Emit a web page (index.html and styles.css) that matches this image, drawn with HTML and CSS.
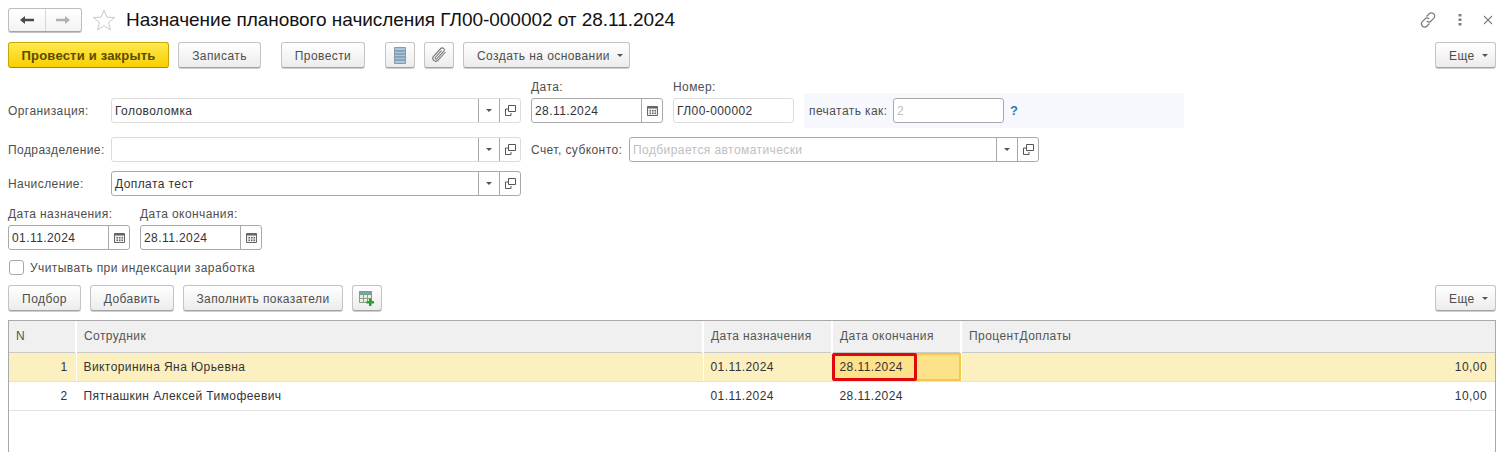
FILE: index.html
```html
<!DOCTYPE html>
<html lang="ru">
<head>
<meta charset="utf-8">
<title>Назначение планового начисления</title>
<link rel="stylesheet" href="styles.css">
</head>
<body>
<div class="page">
  <header class="titlebar">
    <div class="nav">
      <button class="nav-btn"><svg width="16" height="12" viewBox="0 0 16 12"><path d="M1 6l5-4v2.700h9v2.600H6V10z" fill="#4a4a4a"/></svg></button>
      <button class="nav-btn"><svg width="16" height="12" viewBox="0 0 16 12"><path d="M15 6l-5-4v2.700H1v2.600h9V10z" fill="#b0b0b0"/></svg></button>
    </div>
    <svg class="star" width="24" height="24" viewBox="0 0 24 24"><path d="M12 2l2.900 7.100 7.600.5-5.900 4.900 1.900 7.400L12 17.800l-6.500 4.100 1.900-7.400-5.900-4.900 7.600-.5z" fill="#fff" stroke="#c9c9c9"/></svg>
    <h1 class="title">Назначение планового начисления ГЛ00-000002 от 28.11.2024</h1>
    <div class="win-icons">
      <svg width="18" height="18" viewBox="0 0 18 18" fill="none" stroke="#7d7d7d" stroke-width="1.200"><path d="M7.500 5.500l2.500-2.500a3 3 0 0 1 4.700 4.300l-2.700 2.700a3 3 0 0 1-4.200 0"/><path d="M10.500 12.500L8 15a3 3 0 0 1-4.700-4.300L6 8a3 3 0 0 1 4.200 0"/></svg>
      <svg width="4" height="14" viewBox="0 0 4 14"><path d="M0.500 1h3v2.500h-3zM0.500 5.500h3V8h-3zM0.500 10h3v2.500h-3z" fill="#808080"/></svg>
      <svg width="10" height="10" viewBox="0 0 10 10"><path d="M1 1l8 8M9 1l-8 8" stroke="#808080" stroke-width="1.100"/></svg>
    </div>
  </header>

  <div class="toolbar">
    <button class="btn btn-primary w-post">Провести и закрыть</button>
    <button class="btn w-save">Записать</button>
    <button class="btn w-conduct gap-wide">Провести</button>
    <button class="btn btn-icon gap-wide"><svg width="12" height="17" viewBox="0 0 12 17"><path d="M.5.500h11v16H.5z" fill="#a9c8e0" stroke="#8a9aa6"/><path d="M1 4h10M1 7h10M1 10h10M1 13h10" stroke="#6f7f8c"/></svg></button>
    <button class="btn btn-icon"><svg width="18" height="18" viewBox="0 0 18 18" fill="none" stroke="#7a7a7a" stroke-width="1.100"><path d="M15.500 6l-7.800 8.500a3 3 0 0 1-4.400-4l7.500-8a2 2 0 0 1 3 2.700l-7 7.600a1 1 0 0 1-1.500-1.300l6.200-6.800"/></svg></button>
    <button class="btn w-create">Создать на основании<span class="caret"></span></button>
    <button class="btn w-more push">Еще<span class="caret"></span></button>
  </div>

  <div class="form-row row-top">
    <label class="label">Организация:</label>
    <div class="field w-main"><span class="value">Головоломка</span><span class="cell-btn"><span class="caret"></span></span><span class="cell-btn"><svg class="open" width="11" height="11" viewBox="0 0 11 11"><path d="M3.500.5h7v6h-7zM3.500 4H.500v6.500H6V8" fill="none" stroke="#555"/></svg></span></div>
    <div class="stack stack-date">
      <span class="top-label">Дата:</span>
      <div class="field field-strong w-date"><span class="value">28.11.2024</span><span class="cell-btn"><svg class="cal" width="11" height="11" viewBox="0 0 11 11"><path d="M.5 1.500h10v9H.5z" fill="#eee" stroke="#666"/><path d="M.5 2.500h10" stroke="#666" stroke-width="2"/><path d="M2.500 5h1.500v1.500H2.500zM5 5h1.500v1.500H5zM7.500 5H9v1.500H7.500zM2.500 7.500h1.500V9H2.500zM5 7.500h1.500V9H5zM7.500 7.500H9V9H7.500z" fill="#666"/></svg></span></div>
    </div>
    <div class="stack stack-num">
      <span class="top-label">Номер:</span>
      <div class="field w-num"><span class="value">ГЛ00-000002</span></div>
    </div>
    <div class="print-band">
      <span class="label-inline">печатать как:</span>
      <div class="field field-strong w-print"><span class="value value-muted">2</span></div>
      <span class="help">?</span>
    </div>
  </div>

  <div class="form-row row-sub">
    <label class="label">Подразделение:</label>
    <div class="field w-main"><span class="value"></span><span class="cell-btn"><span class="caret"></span></span><span class="cell-btn"><svg class="open" width="11" height="11" viewBox="0 0 11 11"><path d="M3.500.5h7v6h-7zM3.500 4H.500v6.500H6V8" fill="none" stroke="#555"/></svg></span></div>
    <label class="label-inline label-account">Счет, субконто:</label>
    <div class="field field-strong w-account"><span class="value value-muted">Подбирается автоматически</span><span class="cell-btn"><span class="caret"></span></span><span class="cell-btn"><svg class="open" width="11" height="11" viewBox="0 0 11 11"><path d="M3.500.5h7v6h-7zM3.500 4H.500v6.500H6V8" fill="none" stroke="#555"/></svg></span></div>
  </div>

  <div class="form-row row-acc">
    <label class="label">Начисление:</label>
    <div class="field field-strong w-main"><span class="value">Доплата тест</span><span class="cell-btn"><span class="caret"></span></span><span class="cell-btn"><svg class="open" width="11" height="11" viewBox="0 0 11 11"><path d="M3.500.5h7v6h-7zM3.500 4H.500v6.500H6V8" fill="none" stroke="#555"/></svg></span></div>
  </div>

  <div class="form-row row-dates">
    <div class="stack">
      <span class="top-label">Дата назначения:</span>
      <div class="field w-period field-strong"><span class="value">01.11.2024</span><span class="cell-btn"><svg class="cal" width="11" height="11" viewBox="0 0 11 11"><path d="M.5 1.500h10v9H.5z" fill="#eee" stroke="#666"/><path d="M.5 2.500h10" stroke="#666" stroke-width="2"/><path d="M2.500 5h1.500v1.500H2.500zM5 5h1.500v1.500H5zM7.500 5H9v1.500H7.500zM2.500 7.500h1.500V9H2.500zM5 7.500h1.500V9H5zM7.500 7.500H9V9H7.500z" fill="#666"/></svg></span></div>
    </div>
    <div class="stack">
      <span class="top-label">Дата окончания:</span>
      <div class="field w-period field-strong"><span class="value">28.11.2024</span><span class="cell-btn"><svg class="cal" width="11" height="11" viewBox="0 0 11 11"><path d="M.5 1.500h10v9H.5z" fill="#eee" stroke="#666"/><path d="M.5 2.500h10" stroke="#666" stroke-width="2"/><path d="M2.500 5h1.500v1.500H2.500zM5 5h1.500v1.500H5zM7.500 5H9v1.500H7.500zM2.500 7.500h1.500V9H2.500zM5 7.500h1.500V9H5zM7.500 7.500H9V9H7.500z" fill="#666"/></svg></span></div>
    </div>
  </div>

  <div class="check-row"><span class="checkbox"></span><span class="label-inline">Учитывать при индексации заработка</span></div>

  <div class="toolbar toolbar-table">
    <button class="btn w-pick">Подбор</button>
    <button class="btn w-add">Добавить</button>
    <button class="btn w-fill">Заполнить показатели</button>
    <button class="btn btn-icon"><svg width="17" height="15" viewBox="0 0 17 15"><path d="M.5.500h12v11H.5z" fill="#e6eedc" stroke="#8a9a8a"/><path d="M.5.500h12v3H.5z" fill="#7aa5a0" stroke="#7a9a94"/><path d="M4.500 1v11M8.500 1v11M1 7.500h11" stroke="#8fa08f"/><path d="M10 7.500h2.500V10H15v2.500h-2.500V15H10v-2.500H7.500V10H10z" fill="#2e9e2e"/></svg></button>
    <button class="btn w-more push">Еще<span class="caret"></span></button>
  </div>

  <div class="table-wrap">
    <table class="grid">
      <colgroup><col class="c-n"><col class="c-name"><col class="c-date"><col class="c-date"><col></colgroup>
      <thead><tr><th>N</th><th>Сотрудник</th><th>Дата назначения</th><th>Дата окончания</th><th>ПроцентДоплаты</th></tr></thead>
      <tbody>
        <tr class="selected"><td class="num">1</td><td>Викторинина Яна Юрьевна</td><td>01.11.2024</td><td class="active"><span class="marked">28.11.2024</span></td><td class="num">10,00</td></tr>
        <tr><td class="num">2</td><td>Пятнашкин Алексей Тимофеевич</td><td>01.11.2024</td><td>28.11.2024</td><td class="num">10,00</td></tr>
      </tbody>
    </table>
  </div>
</div>
</body>
</html>
```
FILE: styles.css
```css
* { box-sizing: border-box; }
html, body { margin: 0; height: 452px; overflow: hidden; background: #fff; }
body { font-family: "Liberation Sans", Arial, sans-serif; font-size: 12px; letter-spacing: .42px; color: #4e4e4e; }
.page { display: flex; flex-direction: column; height: 452px; padding: 8px 14px 0 8px; }

.titlebar { display: flex; align-items: center; height: 24px; }
.nav { display: flex; width: 74px; height: 24px; border: 1px solid #bdbdbd; border-bottom-color: #a5a5a5; border-radius: 3px; background: linear-gradient(#fff, #f3f3f3); box-shadow: 0 1px 0 #c4c4c4; }
.nav-btn { flex: 1; display: flex; align-items: center; justify-content: center; padding: 0; border: 0; background: none; }
.nav-btn + .nav-btn { border-left: 1px solid #d8d8d8; }
.star { margin-left: 10px; }
.title { margin: 0 0 0 10px; font-size: 19px; line-height: 24px; font-weight: 400; color: #111; letter-spacing: -.04px; white-space: nowrap; }
.win-icons { margin-left: auto; display: flex; align-items: center; gap: 21px; padding-right: 3px; }

.toolbar { display: flex; align-items: stretch; gap: 9px; height: 26px; margin-top: 10px; }
.toolbar-table { margin-top: 10px; }
.btn { display: inline-flex; align-items: center; justify-content: center; padding: 1px 0 0; height: 26px; border: 1px solid #c4c4c4; border-bottom-color: #a3a3a3; border-radius: 3px; background: linear-gradient(#fff, #ececec); box-shadow: 0 1px 0 #cfcfcf; font: inherit; letter-spacing: inherit; color: #4e4e4e; white-space: nowrap; }
.btn-primary { border-color: #c9a700; border-bottom-color: #a88a00; background: linear-gradient(#ffe94d, #f8cf00); color: #5b4b00; font-weight: 700; font-size: 13px; letter-spacing: .2px; box-shadow: none; }
.btn-icon { width: 30px; padding: 0; }
.gap-wide { margin-left: 11px; }
.w-post { width: 161px; }
.w-save { width: 83px; }
.w-conduct { width: 84px; }
.w-create { width: 167px; justify-content: flex-start; padding-left: 13px; }
.w-more { width: 61px; justify-content: flex-start; padding-left: 13px; }
.w-pick { width: 73px; }
.w-add { width: 84px; }
.w-fill { width: 160px; }
.push { margin-left: auto; }
.caret { display: inline-block; width: 0; height: 0; margin-left: 7px; border: 3px solid transparent; border-top: 3px solid #555; border-bottom: 0; }

.form-row { display: flex; }
.row-top { align-items: flex-end; height: 55px; }
.row-sub { margin-top: 14px; height: 25px; align-items: center; }
.row-acc { margin-top: 9px; height: 25px; align-items: center; }
.row-dates { margin-top: 9px; gap: 10px; }
.label { width: 103px; height: 25px; padding-top: 2px; line-height: 23px; align-self: flex-end; white-space: nowrap; }
.label-inline { white-space: nowrap; }
.label-account { margin-left: 10px; width: 98px; }
.stack { display: flex; flex-direction: column; }
.stack-date { margin-left: 10px; }
.stack-num { margin-left: 10px; }
.top-label { line-height: 18px; height: 20px; white-space: nowrap; }
.field { display: flex; align-items: stretch; height: 25px; border: 1px solid #dcdcdc; border-radius: 3px; background: #fff; }
.field-strong { border-color: #a9a9a9; }
.value { flex: 1; min-width: 0; padding-left: 3px; line-height: 25px; color: #333; white-space: nowrap; overflow: hidden; }
.value-muted { color: #c0c0c0; }
.cell-btn { display: flex; align-items: center; justify-content: center; width: 21px; border-left: 1px solid #a9a9a9; }
.cell-btn .caret { margin: 0; }
.w-main { width: 410px; }
.w-date { width: 132px; }
.w-num { width: 121px; }
.w-print { width: 111px; }
.w-account { width: 410px; }
.w-period { width: 122px; }
.print-band { display: flex; align-items: center; width: 380px; height: 35px; margin: 0 0 -5px 10px; padding-left: 5px; background: #f6f8fe; }
.print-band .label-inline { width: 84px; }
.help { margin-left: 6px; font-size: 13px; font-weight: 700; color: #2f7ba8; }

.check-row { display: flex; align-items: center; gap: 6px; margin-top: 10px; height: 15px; padding-left: 1px; }
.checkbox { width: 15px; height: 15px; border: 1px solid #a9a9a9; border-radius: 3px; background: #fff; }

.table-wrap { flex: 1; margin-top: 9px; border: 1px solid #a9a9a9; border-bottom: 0; overflow: hidden; }
.grid { width: 100%; border-collapse: collapse; table-layout: fixed; }
.c-n { width: 67px; }
.c-name { width: 627px; }
.c-date { width: 129px; }
.grid th { height: 31px; padding: 0 8px 0 7px; background: #f0f0f0; border-right: 2px solid #fff; border-bottom: 1px solid #c9c9c9; font-weight: 400; text-align: left; color: #555; }
.grid th:last-child { border-right: 0; }
.grid td { height: 29px; padding: 0 8px 0 7px; border-right: 1px solid #fff; border-bottom: 1px solid #e3e3e3; color: #333; white-space: nowrap; }
.grid td:last-child { border-right: 0; }
.grid td.num { text-align: right; }
.selected td { background: #fdf0c0; }
.grid td.active { position: relative; background: #fde28a; box-shadow: inset 0 0 0 2px #f4c84a; }
.marked { position: absolute; left: -1px; top: 0; display: flex; align-items: center; width: 85px; height: 28px; padding-left: 5px; border: 3px solid #e0080c; border-radius: 2px; }
```
